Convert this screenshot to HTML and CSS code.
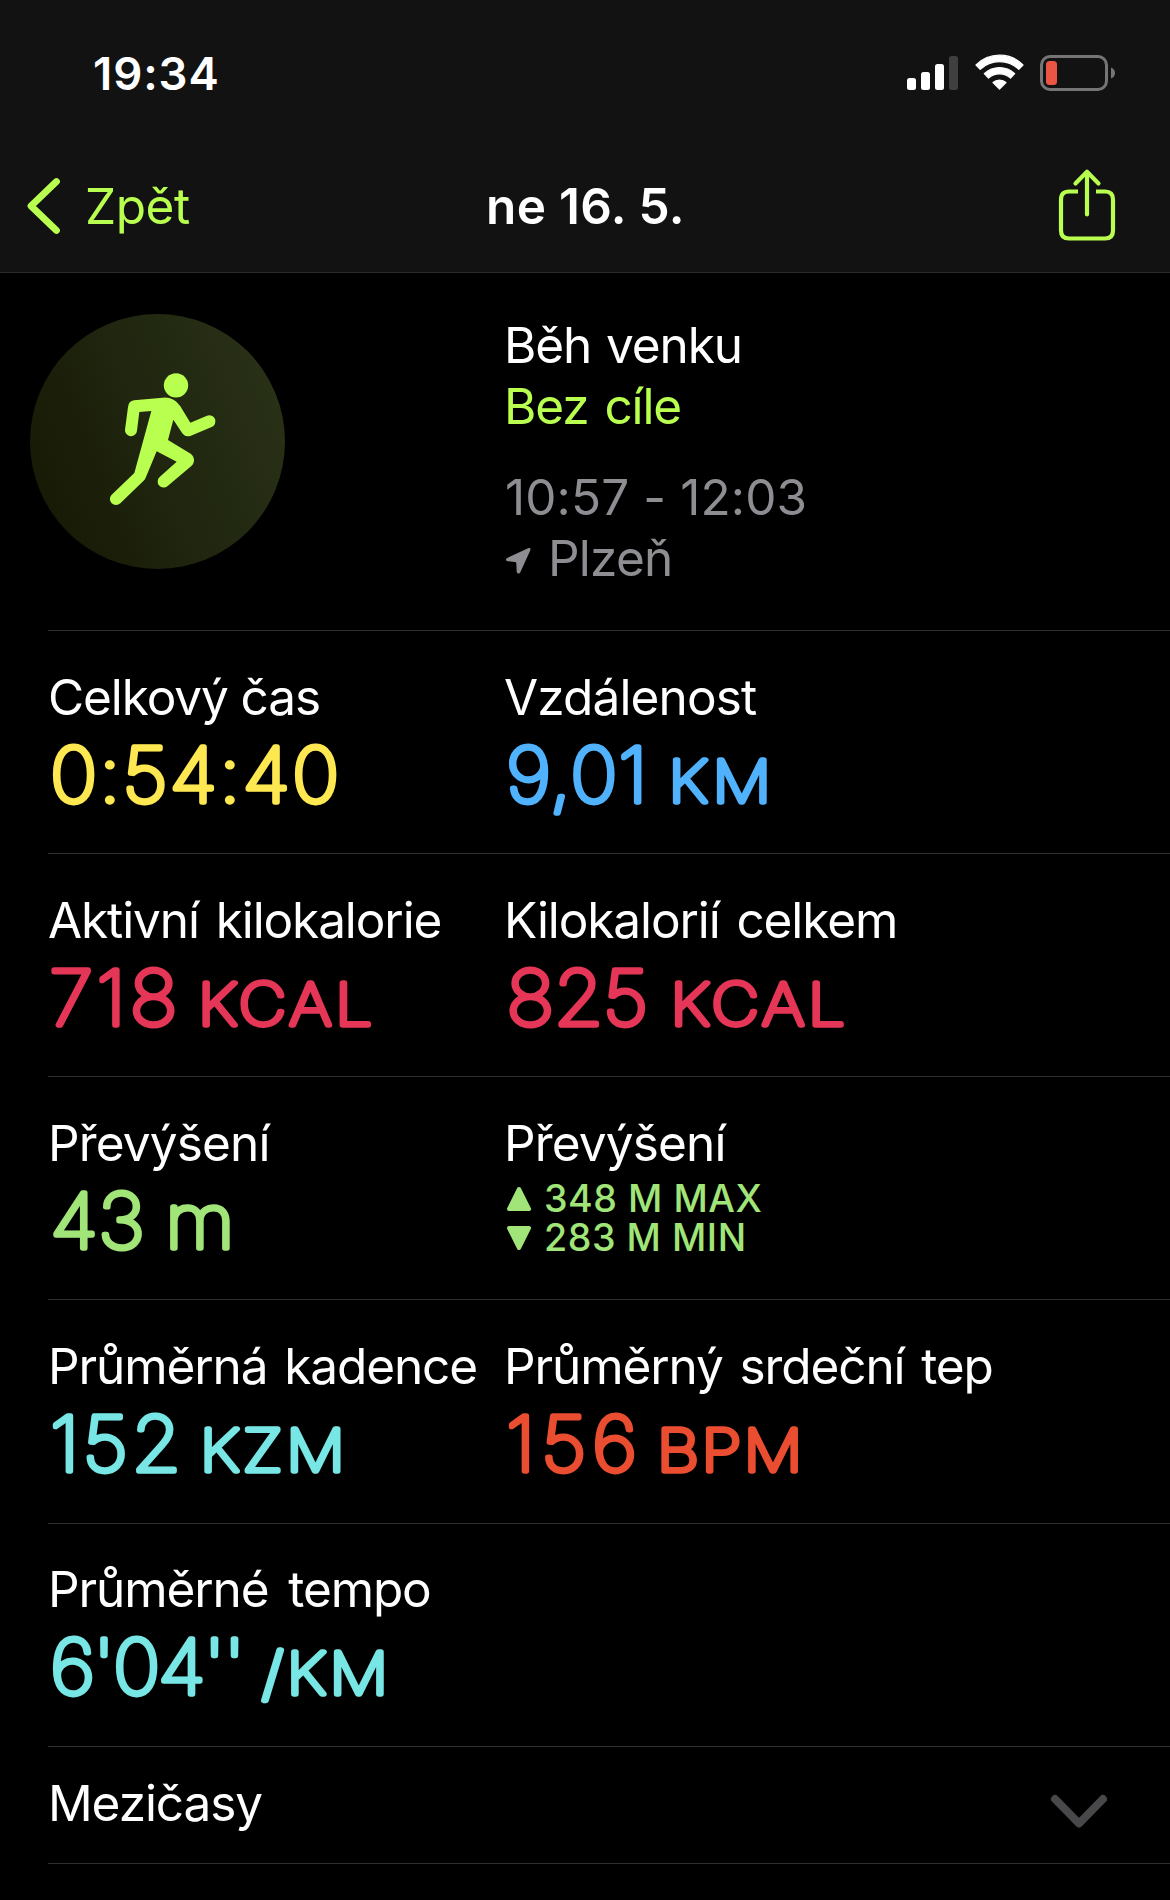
FILE: index.html
```html
<!DOCTYPE html>
<html lang="cs">
<head>
<meta charset="utf-8">
<title>ne 16. 5.</title>
<link rel="stylesheet" href="styles.css">
</head>
<body>
<header class="header">
  <div class="status">
    <span class="time">19:34</span>
    <div class="status-icons">
      <svg class="signal" width="51" height="34" viewBox="0 0 51 34"><rect y="22" width="9" height="12" rx="2.5"/><rect x="14" y="16" width="9" height="18" rx="2.5"/><rect x="28" y="8" width="9" height="26" rx="2.5"/><rect class="off" x="42" width="9" height="34" rx="2.5"/></svg>
      <svg class="wifi" width="49" height="36" viewBox="0 0 49 36"><path d="M1 11A33 33 0 0 1 48 11L43.8 15.3A28 28 0 0 0 5.2 15.3ZM9.3 19.7A22 22 0 0 1 39.7 19.7L35.5 24A16.5 16.5 0 0 0 13.5 24ZM18 28.5A10 10 0 0 1 31 28.5L24.5 35Z"/></svg>
      <svg class="battery" width="75" height="36" viewBox="0 0 75 36"><rect class="shell" x="1.5" y="1.5" width="65" height="33" rx="8.5"/><rect class="charge" x="6" y="6" width="11" height="24" rx="3.5"/><path class="nub" d="M71 12.5Q75 14 75 18T71 23.5Z"/></svg>
    </div>
  </div>
  <nav class="nav">
    <a class="back"><svg width="34" height="58" viewBox="0 0 34 58"><path d="M29.5 4.5L4 29L29.5 53.5"/></svg><span>Zpět</span></a>
    <h1 class="title">ne 16. 5.</h1>
    <svg class="share" width="58" height="73" viewBox="0 0 58 73"><path d="M20 22.5H11Q3 22.5 3 30.5V61.5Q3 69.5 11 69.5H47Q55 69.5 55 61.5V30.5Q55 22.5 47 22.5H38"/><path class="arrow" d="M29 45.5V3M17.5 14.5L29 2.8L40.5 14.5"/></svg>
  </nav>
</header>

<main>
  <section class="hero">
    <svg class="badge" width="255" height="255" viewBox="90 71 765 765">
      <defs><linearGradient id="olive" x1="0" y1=".7" x2="1" y2=".3"><stop offset="0" stop-color="#171904"/><stop offset=".5" stop-color="#20260f"/><stop offset="1" stop-color="#293117"/></linearGradient></defs>
      <circle cx="472.5" cy="453.5" r="382.5" fill="url(#olive)"/>
      <g class="runner"><circle cx="528" cy="285" r="36.5"/>
      <path d="M402 330L488 322Q522 319 541 348L571 397L621 376A18 18 0 0 1 635 410L571 437Q557 441 548 430L520 388L504 449L572 490Q583 498 582 512Q581 521 574 527L503 587A18 18 0 0 1 479 560L530 514L470 483L437 562Q435 568 430 572L361 639A18 18 0 0 1 335 613L403 548L454 362L418 365L411 421A18 18 0 0 1 375 418L384 350Q386 332 402 330Z"/></g>
    </svg>
    <div class="summary">
      <p class="name">Běh venku</p>
      <p class="goal">Bez cíle</p>
      <p class="span">10:57 - 12:03</p>
      <p class="place"><svg width="27" height="27" viewBox="75 770 81 81"><path d="M146 773Q153 771 151 780L121 846Q118 851 113 849Q110 847 110 843L109 819Q109 815 105 815L83 813Q77 812 78 807Q79 804 83 802Z"/></svg><span>Plzeň</span></p>
    </div>
  </section>

  <section class="row">
    <div><h2 class="label even">Celkový čas</h2><svg class="value yellow"><text x="1.9" y="75" letter-spacing="1.76">0:54:40</text></svg></div>
    <div><h2 class="label loose">Vzdálenost</h2><svg class="value blue"><text x="1.9" y="75" letter-spacing=".73">9,01</text><text class="unit" x="164.6" y="75" letter-spacing="4.2">KM</text></svg></div>
  </section>
  <section class="row">
    <div><h2 class="label">Aktivní kilokalorie</h2><svg class="value red"><text x="1.2" y="75" letter-spacing="3.45">718</text><text class="unit" x="149.9" y="75" letter-spacing="3.5">KCAL</text></svg></div>
    <div><h2 class="label">Kilokalorií celkem</h2><svg class="value red"><text x="2.5" y="75" letter-spacing="-.45">825</text><text class="unit" x="166.6" y="75" letter-spacing="3.5">KCAL</text></svg></div>
  </section>
  <section class="row">
    <div><h2 class="label loose">Převýšení</h2><svg class="value green"><text x="2.2" y="75" letter-spacing=".4">43</text><text x="117.2" y="75">m</text></svg></div>
    <div><h2 class="label loose">Převýšení</h2>
      <div class="extremes">
        <p><svg width="24" height="24" viewBox="0 0 24 24"><path d="M12 2L22 22H2Z"/></svg><span>348 M MAX</span></p>
        <p><svg width="24" height="24" viewBox="0 0 24 24"><path d="M12 22L22 2H2Z"/></svg><span>283 M MIN</span></p>
      </div>
    </div>
  </section>
  <section class="row tall">
    <div><h2 class="label">Průměrná kadence</h2><svg class="value cyan"><text x="2" y="75" letter-spacing="3.27">152</text><text class="unit" x="151.9" y="75" letter-spacing="3.3">KZM</text></svg></div>
    <div><h2 class="label">Průměrný srdeční tep</h2><svg class="value orange"><text x="2" y="75" letter-spacing="5.47">156</text><text class="unit" x="152.9" y="75" letter-spacing="2.3">BPM</text></svg></div>
  </section>
  <section class="row last">
    <div><h2 class="label wide">Průměrné tempo</h2><svg class="value cyan"><text x="2" y="75" letter-spacing="-2">6'04''</text><text class="unit" x="214" y="75" letter-spacing="3.15">/KM</text></svg></div>
  </section>
  <section class="splits">
    <h2 class="label">Mezičasy</h2>
    <svg width="58" height="35" viewBox="0 0 58 35"><path d="M5 5L29 29.5L53 5"/></svg>
  </section>
</main>
</body>
</html>
```
FILE: styles.css
```css
* { box-sizing: border-box; margin: 0; padding: 0; }
body { width: 1170px; height: 1900px; background: #000; color: #fff; font-family: Inter, "Liberation Sans", sans-serif; overflow: hidden; }
svg { display: block; flex: none; overflow: visible; }

.header { height: 273px; background: #121212; border-bottom: 1px solid #2a2a2b; }
.status { display: flex; justify-content: space-between; height: 145px; padding: 45px 55px 0 93px; }
.time { font-size: 45.5px; line-height: 58px; font-weight: 600; letter-spacing: .9px; }
.status-icons { display: flex; padding-top: 9px; }
.signal { margin: 2px 17px 0 0; fill: #fff; }
.signal .off { fill: #3f3f3f; }
.wifi { fill: #fff; stroke: #fff; stroke-width: 1.2; stroke-linejoin: round; margin-right: 16px; }
.battery { margin-top: 1px; }
.battery .shell { fill: none; stroke: #757575; stroke-width: 3; }
.battery .charge { fill: #eb5545; }
.battery .nub { fill: #757575; }

.nav { display: grid; grid-template-columns: 1fr auto 1fr; padding: 31px 54px 0 27px; font-size: 49.5px; line-height: 60px; }
.back { display: flex; color: #b9ff4f; letter-spacing: -.43px; }
.back svg { margin: 1px 24px 0 0; fill: none; stroke: #b9ff4f; stroke-width: 6.8; stroke-linecap: round; stroke-linejoin: round; }
.title { font-size: inherit; font-weight: 600; letter-spacing: .32px; padding-left: 28px; }
.share { justify-self: end; margin-top: -7px; fill: none; stroke: #b9ff4f; stroke-width: 4.2; }
.share .arrow { stroke-linecap: round; stroke-linejoin: round; }

.hero { display: grid; grid-template-columns: 474px 1fr; height: 357px; padding: 41px 0 0 30px; font-size: 49.5px; line-height: 61px; letter-spacing: -1.1px; }
.summary { padding-top: 1px; }
.runner { fill: #b9ff4f; }
.goal { color: #b9ff4f; word-spacing: 3px; }
.name { word-spacing: 2px; }
.span { margin-top: 30px; color: #8e8d92; letter-spacing: .12px; padding-left: 1px; }
.place { display: flex; align-items: center; color: #8e8d92; letter-spacing: -.77px; gap: 16px; }
.place svg { margin: 3px 0 0 1px; fill: #8e8d92; }

.row { display: grid; grid-template-columns: 456px 1fr; height: 223px; margin-left: 48px; padding-top: 36px; border-top: 1px solid #303031; }
.row.tall { height: 224px; }
.row.last { padding-top: 35px; }
.label { font-size: 49.5px; line-height: 60px; font-weight: 400; letter-spacing: -1.1px; word-spacing: 4px; white-space: nowrap; }
.label.even { word-spacing: 0; }
.label.wide { word-spacing: 7px; }
.label.loose { letter-spacing: -.85px; }

/* Hairline digits with a round-joined outline give the soft, rounded numerals. */
.value { width: 400px; height: 90px; font-size: 75.5px; font-weight: 100; stroke-width: 5.4; stroke-linejoin: round; stroke-linecap: round; }
.value text { transform-box: fill-box; transform-origin: 0 0; transform: scaleX(1.06); }
.value .unit { font-size: 58px; transform: scaleX(1.13); }
.yellow { fill: #fee852; stroke: #fee852; }
.blue { fill: #50b1fc; stroke: #50b1fc; }
.red { fill: #e63657; stroke: #e63657; }
.green { fill: #a1e579; stroke: #a1e579; }
.cyan { fill: #77e6e4; stroke: #77e6e4; }
.orange { fill: #ea4d30; stroke: #ea4d30; }

.extremes { padding-top: 6px; color: #a1e579; font-size: 37.6px; line-height: 39px; font-weight: 500; letter-spacing: .55px; }
.extremes p { display: flex; align-items: center; gap: 13px; }
.extremes svg { margin-left: 3px; fill: #a1e579; stroke: #a1e579; stroke-width: 4; stroke-linejoin: round; }

.splits { display: flex; justify-content: space-between; height: 118px; margin-left: 48px; padding: 26px 62px 0 0; border: solid #303031; border-width: 1px 0; }
.splits svg { margin-top: 21px; fill: none; stroke: #48484a; stroke-width: 8; stroke-linecap: round; stroke-linejoin: round; }
```
